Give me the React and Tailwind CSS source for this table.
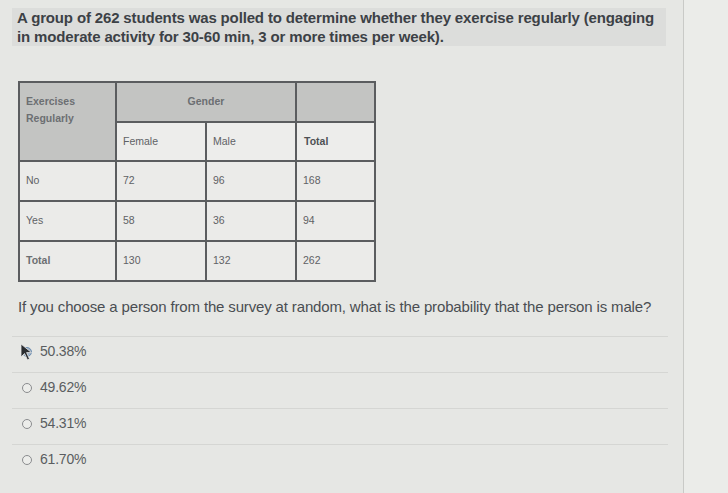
import React from 'react'

const font = { fontFamily: '"Liberation Sans", Arial, sans-serif' }

const rows = [
  ['No', '72', '96', '168'],
  ['Yes', '58', '36', '94'],
  ['Total', '130', '132', '262'],
]

const options = ['50.38%', '49.62%', '54.31%', '61.70%']

const Cursor = () => (
  <svg className="absolute left-[-2px] top-[-4px] w-[13px] h-[18px]" viewBox="0 0 13 18">
    <path d="M1 1 L1 14 L4.5 10.5 L7.5 17 L9.5 16 L6.6 9.6 L11.5 9.6 Z" fill="#2a2d30" stroke="#e8e8e8" strokeWidth="0.8" />
  </svg>
)

const Option = ({ label, index }) => (
  <div className="h-[36px] flex items-center pl-[10px] pb-[5px] border-t border-[#d5d6d3]">
    <div className="relative w-[10px] h-[10px] mr-[8px]">
      <div className={`w-[10px] h-[10px] rounded-full border ${index === 0 ? 'border-[#6f8fb0] bg-[#9fb3c8]' : 'border-[#8a8c8e] bg-[#ecedea]'}`}></div>
      {index === 0 && <Cursor />}
    </div>
    <span className="text-[14px] text-[#5a5d60] tracking-[-0.2px]">{label}</span>
  </div>
)

export default function App() {
  return (
    <div className="w-[728px] h-[493px] bg-[#e6e7e4] flex overflow-hidden" style={font}>
      <div className="w-[684px] border-r border-[#c9cac7] pt-[8px]">
        <div className="ml-[12px] w-[654px] bg-[#dcdddb] pl-[5px] text-[15px] leading-[19px] font-bold text-[#3c4146] tracking-[-0.15px]">
          <p>A group of 262 students was polled to determine whether they exercise regularly (engaging</p>
          <p>in moderate activity for 30-60 min, 3 or more times per week).</p>
        </div>

        <table className="ml-[18px] mt-[35px] border-collapse text-[10.5px] text-[#5f6265]">
          <tbody>
            <tr className="h-[40px]">
              <td rowSpan={2} className="w-[97px] border-2 border-[#5b5d5f] bg-[#c3c4c2] align-top pt-[10px] pl-[6px] font-bold text-[#6c6f72] leading-[17px]">
                Exercises<br />Regularly
              </td>
              <td colSpan={2} className="border-2 border-[#5b5d5f] bg-[#c3c4c2] text-center font-bold text-[#6c6f72]">Gender</td>
              <td className="w-[79px] border-2 border-[#5b5d5f] bg-[#c3c4c2]"></td>
            </tr>
            <tr className="h-[39px] bg-[#ededeb]">
              <td className="w-[90px] border-2 border-[#5b5d5f] pl-[6px]">Female</td>
              <td className="w-[90px] border-2 border-[#5b5d5f] pl-[6px]">Male</td>
              <td className="border-2 border-[#5b5d5f] pl-[7px] font-bold text-[#4e5154]">Total</td>
            </tr>
            {rows.map((r) => (
              <tr key={r[0]} className="h-[40px] bg-[#ebebe9]">
                {r.map((c, i) => (
                  <td key={i} className={`border-2 border-[#5b5d5f] pl-[6px] ${r[0] === 'Total' && i === 0 ? 'font-bold text-[#6c6f72]' : ''}`}>{c}</td>
                ))}
              </tr>
            ))}
          </tbody>
        </table>

        <p className="ml-[18px] mt-[14px] text-[15px] text-[#4a4e52] tracking-[-0.15px]">
          If you choose a person from the survey at random, what is the probability that the person is male?
        </p>

        <div className="ml-[12px] w-[656px] mt-[17px]">
          {options.map((o, i) => (
            <Option key={o} label={o} index={i} />
          ))}
        </div>
      </div>
      <div className="flex-1 bg-[#ebece9]"></div>
    </div>
  )
}
